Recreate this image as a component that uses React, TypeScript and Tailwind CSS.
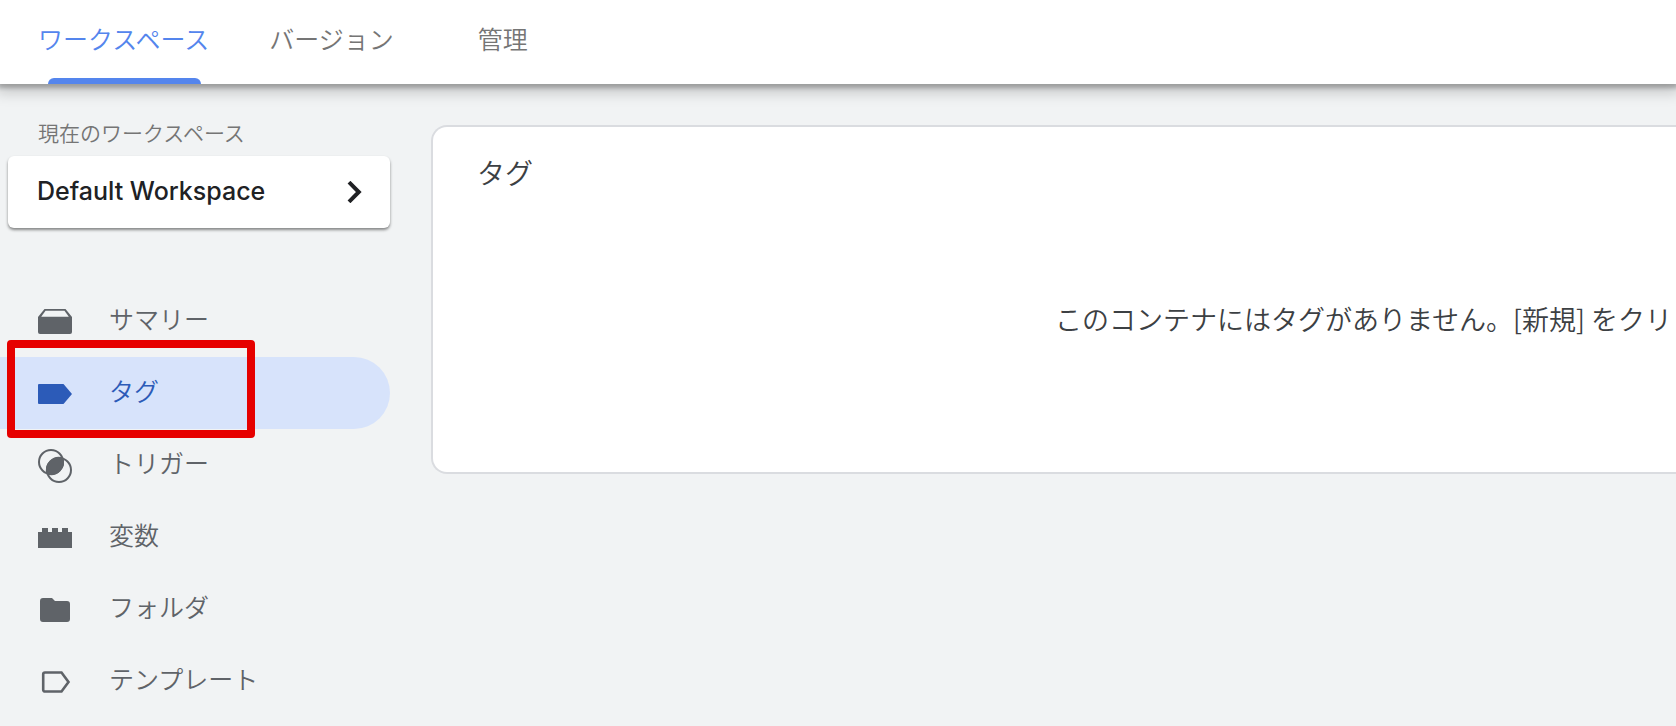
import type { ReactNode } from 'react';

interface NavItem {
  id: string;
  label: string;
  icon: ReactNode;
}

const tabs = [
  { id: 'workspace', label: 'ワークスペース' },
  { id: 'versions', label: 'バージョン' },
  { id: 'admin', label: '管理' },
];

const navItems: NavItem[] = [
  {
    id: 'summary',
    label: 'サマリー',
    icon: (
      <>
        <path d="M6.5 4h21L34 12v15a2 2 0 0 1-2 2H2a2 2 0 0 1-2-2V12z" />
        <path d="M7.5 5.8h19l4.3 5.9H3.2z" className="fill-[#f1f3f4]" />
      </>
    ),
  },
  {
    id: 'tags',
    label: 'タグ',
    icon: <path d="M1 7h24.5L34 17l-8.5 10H1a1 1 0 0 1-1-1V8a1 1 0 0 1 1-1z" />,
  },
  {
    id: 'triggers',
    label: 'トリガー',
    icon: (
      <>
        <circle cx="13" cy="13" r="12" fill="none" stroke="currentColor" strokeWidth="2" />
        <circle cx="21" cy="21" r="12" fill="none" stroke="currentColor" strokeWidth="2" />
        <path d="M25.3 8.7A13 13 0 0 1 8.7 25.3A13 13 0 0 1 25.3 8.7z" />
      </>
    ),
  },
  {
    id: 'variables',
    label: '変数',
    icon: <path d="M0 11h4V7h6v4h4V7h6v4h4V7h6v4h4v16H0z" />,
  },
  {
    id: 'folders',
    label: 'フォルダ',
    icon: <path d="M5 5h9l3 3h12a3 3 0 0 1 3 3v15a3 3 0 0 1-3 3H5a3 3 0 0 1-3-3V8a3 3 0 0 1 3-3z" />,
  },
  {
    id: 'templates',
    label: 'テンプレート',
    icon: (
      <path
        d="M7 7.5h16.5L30.5 17l-7 9.5H7a1.8 1.8 0 0 1-1.8-1.8V9.3A1.8 1.8 0 0 1 7 7.5z"
        fill="none"
        stroke="currentColor"
        strokeWidth="2.6"
      />
    ),
  },
];

function Header() {
  return (
    <header className="relative z-10 bg-white shadow-[0_2px_4px_2px_rgba(0,0,0,0.22),0_4px_14px_4px_rgba(0,0,0,0.2)]">
      <nav className="flex h-[84px] text-[25px]">
        {tabs.map((tab) => (
          <a
            key={tab.id}
            href={`#${tab.id}`}
            className={`relative flex items-center pb-1.5 ${
              tab.id === 'workspace' ? 'pl-[38px] pr-5 text-[#5485ed]' : 'pl-10 pr-11 text-[#757575]'
            }`}
          >
            {tab.label}
            {tab.id === 'workspace' && (
              <span className="absolute bottom-0 left-12 right-7 h-1.5 rounded-t-md bg-[#5485ed]" />
            )}
          </a>
        ))}
      </nav>
    </header>
  );
}

function Sidebar() {
  return (
    <aside className="w-[390px] shrink-0 pt-8">
      <p className="pl-[38px] text-[21px] leading-8 text-[#757575]">現在のワークスペース</p>
      <button
        type="button"
        className="ml-2 mt-2 flex h-[72px] w-[382px] items-center justify-between rounded-md bg-white pl-[29px] pr-7 font-[Inter] text-[25px] font-medium text-[#202124] shadow-[0_2px_3px_rgba(0,0,0,0.45)]"
      >
        Default Workspace
        <svg width="15" height="22" viewBox="0 0 15 22" fill="none" stroke="currentColor" strokeWidth="4">
          <path d="M2 1.2L11.8 11L2 20.8" />
        </svg>
      </button>

      <nav className="mt-[57px]">
        {navItems.map((item) => (
          <a
            key={item.id}
            href={`#${item.id}`}
            className={`relative flex h-[72px] items-center gap-[37px] rounded-r-full pl-[38px] text-[25px] ${
              item.id === 'tags' ? 'bg-[#d7e3fb] text-[#2c5bb8]' : 'text-[#5f6368]'
            }`}
          >
            <svg width="34" height="34" viewBox="0 0 34 34" fill="currentColor" className="mt-0.5 shrink-0">
              {item.icon}
            </svg>
            <span className="pb-1">{item.label}</span>
            {item.id === 'tags' && (
              <span className="absolute -top-[17px] left-[7px] h-[98px] w-[248px] rounded-sm border-8 border-[#e60000]" />
            )}
          </a>
        ))}
      </nav>
    </aside>
  );
}

export default function App() {
  return (
    <div className="min-h-screen overflow-hidden bg-[#f1f3f4] font-['Noto_Sans_CJK_JP',sans-serif] font-[350]">
      <Header />
      <div className="flex items-start">
        <Sidebar />
        <main className="ml-[41px] mt-[41px] min-h-[349px] flex-1 rounded-l-2xl border-2 border-r-0 border-[#dadce0] bg-white text-[#3c4043]">
          <h1 className="pl-11 pt-6 text-[28px] leading-[42px]">タグ</h1>
          <p className="mt-[106px] pr-1 text-right text-[27px] leading-10">
            このコンテナにはタグがありません。[新規] をクリ
          </p>
        </main>
      </div>
    </div>
  );
}
